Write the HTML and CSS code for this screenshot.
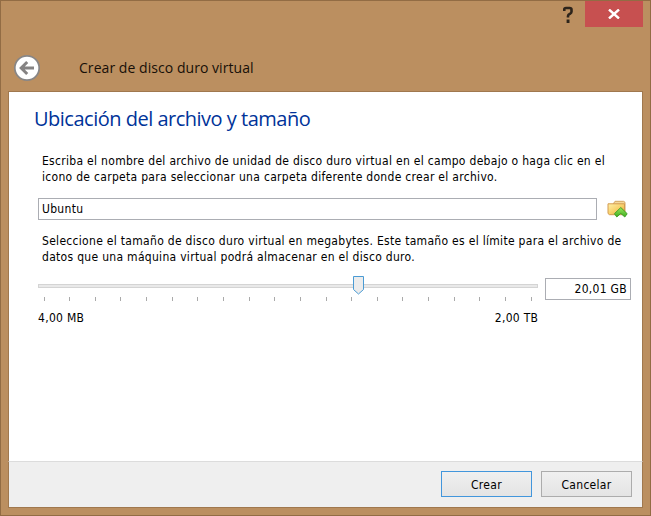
FILE: index.html
```html
<!DOCTYPE html>
<html lang="es">
<head>
<meta charset="utf-8">
<title>Crear de disco duro virtual</title>
<link rel="stylesheet" href="styles.css">
</head>
<body>
<div class="window">
  <header class="chrome">
    <div class="controls">
      <svg class="help" width="12" height="18" viewBox="0 0 12 18"><path fill="none" stroke="#2d241b" stroke-width="2.600" d="M2.300 6V4.200Q2.300 3 4 3h3.600Q9.500 3 9.500 4.500v2.200Q9.500 8 8 8.700 6 9.500 6 11v1.500"/><path fill="#2d241b" d="M4.600 14.500h2.900V18H4.600z"/></svg>
      <div class="close"><svg width="12" height="10" viewBox="0 0 12 10"><path d="M1 .5 11 9.500M11 .5 1 9.500" stroke="#fff" stroke-width="2.400"/></svg></div>
    </div>
    <div class="title">
      <svg width="28" height="28" viewBox="0 0 28 28"><circle cx="14" cy="14" r="12.2" fill="#fff" stroke="#888686" stroke-width="1.7"/><path d="M21 14H9M14.2 8 8.2 14l6 6" fill="none" stroke="#858383" stroke-width="3"/></svg>
      <span class="caption">Crear de disco duro virtual</span>
    </div>
  </header>
  <main class="page">
    <h1>Ubicación del archivo y tamaño</h1>
    <p class="intro"><span>Escriba el nombre del archivo de unidad de disco duro virtual en el campo debajo o haga clic en el</span><span>icono de carpeta para seleccionar una carpeta diferente donde crear el archivo.</span></p>
    <div class="row">
      <div class="field name">Ubuntu</div>
      <svg class="folder" width="22" height="20" viewBox="0 0 22 20">
        <defs>
          <linearGradient id="f" x2="1" y2="1"><stop stop-color="#fff0a8"/><stop offset=".5" stop-color="#f8d16b"/><stop offset="1" stop-color="#e7a83e"/></linearGradient>
          <linearGradient id="g" x2="0" y2="1"><stop stop-color="#9be85c"/><stop offset="1" stop-color="#3dae20"/></linearGradient>
        </defs>
        <path d="M7.500 4.500 9 2.300h8.500l1.500 1V14H7.500z" fill="#f5d99a" stroke="#d3a45e"/>
        <path d="M2 4.800h16.500v10.900H3.500L2 14.500z" fill="url(#f)" stroke="#d39a50"/>
        <path d="m14.800 8.500 6.400 6.200-2.400 3.300-4-3.600-4 3.600-2.400-3.300z" fill="url(#g)" stroke="#3a9a24" stroke-width=".9"/>
      </svg>
    </div>
    <p class="size-help"><span>Seleccione el tamaño de disco duro virtual en megabytes. Este tamaño es el límite para el archivo de</span><span>datos que una máquina virtual podrá almacenar en el disco duro.</span></p>
    <div class="row size-row">
      <div class="slider">
        <svg width="500" height="30" viewBox="0 0 500 30">
          <rect x=".5" y="9.500" width="499" height="3" fill="#e9e9e9" stroke="#d4d4d4"/>
          <path stroke="#aaa" d="M6.500 22v4M31.500 22v4M57.500 22v4M82.500 22v4M108.500 22v4M134.500 22v4M159.500 22v4M185.500 22v4M211.500 22v4M236.500 22v4M262.500 22v4M288.500 22v4M313.500 22v4M339.500 22v4M364.500 22v4M390.500 22v4M416.500 22v4M441.500 22v4M467.500 22v4M493.500 22v4"/>
          <path d="M315.500 1.500h10v13l-5 4.500-5-4.500z" fill="#ececec" stroke="#4a9bd4"/>
        </svg>
        <div class="limits"><span>4,00 MB</span><span>2,00 TB</span></div>
      </div>
      <div class="field size">20,01 GB</div>
    </div>
  </main>
  <footer class="actions">
    <button class="primary">Crear</button>
    <button>Cancelar</button>
  </footer>
</div>
</body>
</html>
```
FILE: styles.css
```css
* { box-sizing: border-box; }
body { margin: 0; color: #000; font: 12px/16px "DejaVu Sans Condensed", "DejaVu Sans", sans-serif; font-stretch: condensed; letter-spacing: .3px; }
svg { display: block; flex: none; }
h1, p { margin: 0; }
p span { display: block; width: max-content; white-space: nowrap; }

.window { width: 651px; height: 516px; padding: 0 7px 7px; display: flex; flex-direction: column; background: #bb8f60; border: 1px solid #926c44; }
.chrome { height: 90px; }
.controls { height: 53px; display: flex; justify-content: flex-end; align-items: flex-start; }
.help { margin: 4px 11px 0 0; }
.close { width: 58px; height: 26px; display: flex; align-items: center; justify-content: center; background: #c75050; }
.title { display: flex; align-items: center; height: 28px; padding-left: 5px; }
.caption { margin-left: 38px; font: 14px/20px "Open Sans", sans-serif; color: #170f08; letter-spacing: .05px; }

.page { flex: 1; padding: 12px 11px 0 29px; background: #fff; border: 1px solid #a0784e; border-bottom: 0; }
h1 { margin-left: -4px; height: 32px; font: 400 20px/30px "Open Sans", sans-serif; color: #003399; white-space: nowrap; letter-spacing: -.5px; }
.intro { margin: 17px 0 0 4px; height: 45px; }
.row { display: flex; align-items: flex-start; }
.field { height: 22px; border: 1px solid #abadb3; background: #fff; line-height: 21px; }
.name { width: 559px; padding-left: 3px; }
.folder { margin: 1px 0 0 9px; }
.size-help { margin: 13px 0 0 4px; height: 42px; }
.slider { width: 500px; }
.limits { display: flex; justify-content: space-between; margin-top: 5px; margin-right: -.3px; }
.size { width: 87px; margin: 3px 0 0 7px; padding-right: 3px; text-align: right; }

.actions { height: 47px; display: flex; justify-content: flex-end; gap: 9px; padding: 9px 10px 0; background: #efefef; border: 1px solid #a0784e; border-top-color: #dcdcdc; }
button { width: 91px; height: 26px; padding: 1px 0 0; font: inherit; letter-spacing: inherit; color: #000; background: linear-gradient(#f0f0f0, #e4e4e4); border: 1px solid #acacac; }
.primary { border-color: #4296dc; }
```
